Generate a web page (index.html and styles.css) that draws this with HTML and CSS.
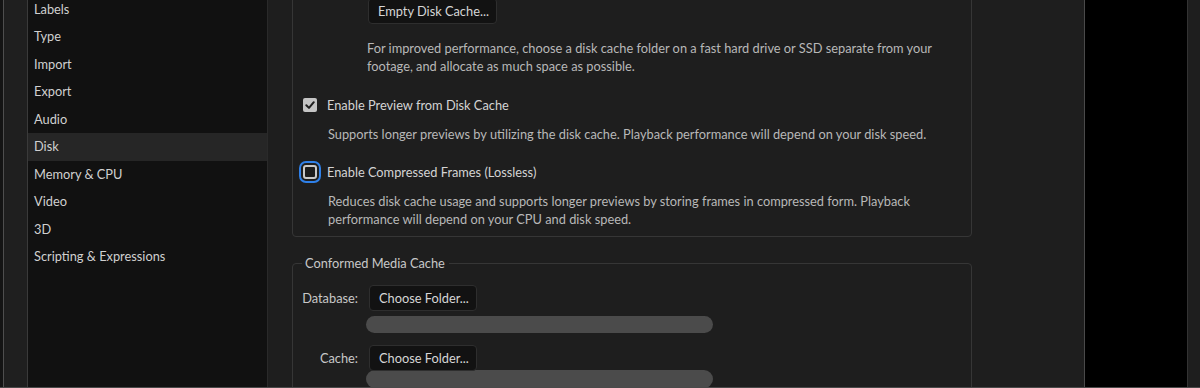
FILE: index.html
```html
<!DOCTYPE html>
<html lang="en">
<head>
<meta charset="utf-8">
<title>Preferences - Disk</title>
<link rel="stylesheet" href="styles.css">
</head>
<body>
<div class="app">
  <div class="gutter"></div>
  <nav class="sidebar">
    <ul class="nav-list">
      <li class="nav-item">Labels</li>
      <li class="nav-item">Type</li>
      <li class="nav-item">Import</li>
      <li class="nav-item">Export</li>
      <li class="nav-item">Audio</li>
      <li class="nav-item active">Disk</li>
      <li class="nav-item">Memory &amp; CPU</li>
      <li class="nav-item">Video</li>
      <li class="nav-item">3D</li>
      <li class="nav-item">Scripting &amp; Expressions</li>
    </ul>
  </nav>
  <main class="main">
    <section class="group group-cache">
      <div class="indent">
        <button class="btn">Empty Disk Cache...</button>
        <p class="desc desc-first">For improved performance, choose a disk cache folder on a fast hard drive or SSD separate from your footage, and allocate as much space as possible.</p>
      </div>
      <label class="check-row row-preview">
        <span class="checkbox checked">
          <svg viewBox="0 0 14 14" width="14" height="14"><path d="M3.3 7.2 L6 9.9 L10.8 4.2" fill="none" stroke="#1e1e1e" stroke-width="2" stroke-linecap="round" stroke-linejoin="round"/></svg>
        </span>
        <span class="check-label">Enable Preview from Disk Cache</span>
      </label>
      <p class="desc desc-sub">Supports longer previews by utilizing the disk cache. Playback performance will depend on your disk speed.</p>
      <label class="check-row row-compressed">
        <span class="checkbox focused"></span>
        <span class="check-label">Enable Compressed Frames (Lossless)</span>
      </label>
      <p class="desc desc-sub desc-last">Reduces disk cache usage and supports longer previews by storing frames in compressed form. Playback performance will depend on your CPU and disk speed.</p>
    </section>
    <fieldset class="group group-media">
      <legend class="legend">Conformed Media Cache</legend>
      <div class="field-row row-db">
        <span class="field-label">Database:</span>
        <button class="btn">Choose Folder...</button>
      </div>
      <div class="path-bar bar-db"></div>
      <div class="field-row row-cache">
        <span class="field-label">Cache:</span>
        <button class="btn">Choose Folder...</button>
      </div>
      <div class="path-bar bar-cache"></div>
    </fieldset>
  </main>
  <div class="black-pane"></div>
  <div class="edge-pane"></div>
</div>
</body>
</html>
```

FILE: styles.css
```css
* { box-sizing: border-box; }
html, body {
  margin: 0;
  padding: 0;
  width: 1200px;
  height: 388px;
  overflow: hidden;
  background: #141414;
  font-family: Lato, "Noto Sans", "Liberation Sans", sans-serif;
  font-size: 12.8px;
  color: #d2d2d2;
}
.app {
  display: flex;
  height: 388px;
  border-bottom: 1px solid #4a4a4a;
  overflow: hidden;
}
.gutter {
  flex: 0 0 25px;
  margin-left: 3px;
  background: #1f1f1f;
  border-left: 1px solid #4e4e4e;
  border-right: 1px solid #3a3a3a;
}
.sidebar {
  flex: 0 0 240px;
  background: #111111;
  border-right: 1px solid #2a2a2a;
  overflow: hidden;
}
.nav-list {
  list-style: none;
  margin: -4.5px 0 0 0;
  padding: 0;
}
.nav-item {
  height: 27.5px;
  line-height: 27.5px;
  padding-left: 6px;
  color: #d0d0d0;
  white-space: nowrap;
}
.nav-item.active {
  background: #262626;
}
.main {
  flex: 0 0 817px;
  background: #1e1e1e;
  border-right: 1px solid #4a4a4a;
  padding-left: 24px;
  overflow: hidden;
}
.group {
  width: 680px;
  border: 1px solid #363636;
  border-radius: 4px;
}
.group-cache {
  margin-top: -10px;
  padding: 7px 10px 8px 10px;
}
.indent {
  padding-left: 65px;
}
.btn {
  display: block;
  height: 26px;
  padding: 0 7px 0 9px;
  background: #121212;
  border: 1px solid #2e2e2e;
  border-radius: 4px;
  color: #d6d6d6;
  font-family: inherit;
  font-size: 12.8px;
  line-height: 24px;
  white-space: nowrap;
}
.desc {
  margin: 0;
  line-height: 18px;
  color: #b8b8b8;
}
.desc-first {
  margin-top: 15px;
  margin-left: -1px;
  width: 580px;
}
.check-row {
  display: flex;
  align-items: center;
  height: 20px;
}
.row-preview { margin-top: 20px; }
.row-compressed { margin-top: 19px; }
.checkbox {
  flex: 0 0 14px;
  width: 14px;
  height: 14px;
  border-radius: 2px;
  margin-right: 10px;
}
.checkbox svg { display: block; }
.checkbox.checked {
  background: #c4c4c4;
}
.checkbox.focused {
  border: 2px solid #c8c8c8;
  background: #1c1c1c;
  outline: 2px solid #2f80e8;
  outline-offset: 2px;
  border-radius: 3px;
}
.check-label {
  color: #d4d4d4;
  white-space: nowrap;
}
.desc-sub {
  margin-top: 10px;
  padding-left: 25px;
  width: 640px;
}
.group-media {
  margin: 17px 0 0 0;
  padding: 0 10px 20px 9px;
  min-width: 0;
}
.legend {
  margin-left: 0;
  padding: 0 4px 0 3px;
  line-height: 18px;
  color: #c8c8c8;
}
.field-row {
  display: flex;
  align-items: center;
  gap: 11px;
}
.row-db { margin-top: 13px; }
.row-cache { margin-top: 12px; }
.field-label {
  flex: 0 0 56px;
  text-align: right;
  color: #c8c8c8;
  white-space: nowrap;
}
.path-bar {
  width: 347px;
  height: 17px;
  margin-left: 64px;
  background: #4b4b4b;
  border-radius: 9px;
}
.bar-db { margin-top: 5px; }
.bar-cache { margin-top: -1px; height: 18px; }
.black-pane {
  flex: 0 0 103px;
  background: #000000;
  border-right: 1px solid #333333;
}
.edge-pane {
  flex: 1 1 auto;
  background: #1e1e1e;
}
```
